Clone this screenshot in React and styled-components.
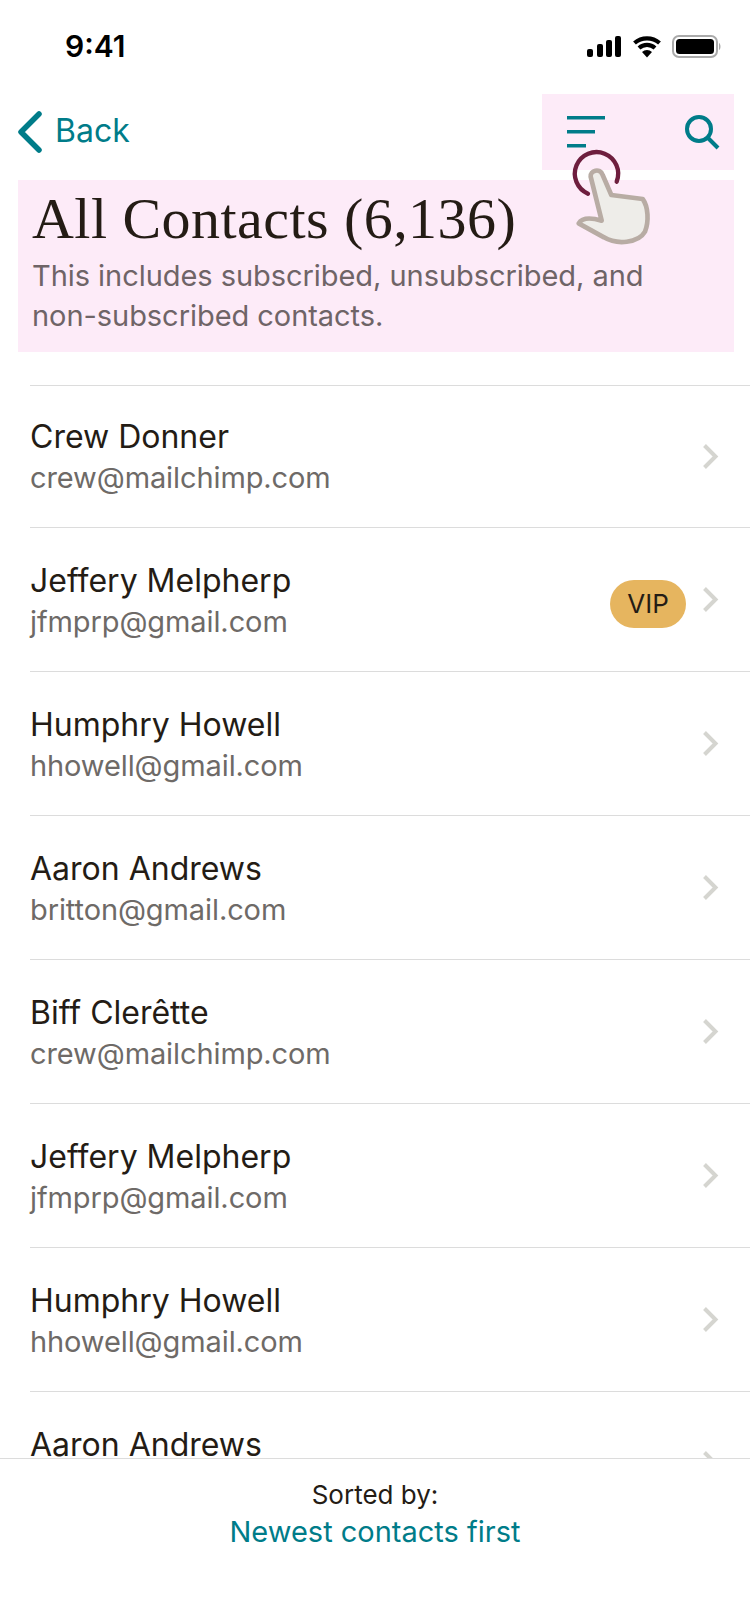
import React from "react";
import styled, { createGlobalStyle } from "styled-components";

const Global = createGlobalStyle`
  html, body { margin: 0; padding: 0; background: #fff; }
  #root { height: 1624px; }
  * { box-sizing: border-box; }
`;

const Screen = styled.div`
  width: 750px;
  height: 1624px;
  position: relative;
  display: flex;
  flex-direction: column;
  overflow: hidden;
  background: #fff;
  font-family: Inter, "Liberation Sans", sans-serif;
  color: #241c15;
`;

const StatusBar = styled.div`
  height: 94px;
  flex: none;
  display: flex;
  justify-content: space-between;
  padding: 26px 28px 0 65px;
`;

const Time = styled.span`
  font-size: 30px;
  line-height: 40px;
  font-weight: 600;
  color: #000;
`;

const StatusIcons = styled.svg`
  width: 135px;
  height: 30px;
  margin-top: 5px;
`;

const NavBar = styled.div`
  flex: none;
  height: 76px;
  display: flex;
  justify-content: space-between;
  align-items: center;
  padding: 0 16px 0 17px;
`;

const BackLink = styled.div`
  display: flex;
  align-items: center;
  gap: 13px;
  font-size: 32px;
  color: #007c89;
`;

const BackLabel = styled.span`
  margin-bottom: 4px;
`;

const Actions = styled.div`
  width: 192px;
  height: 76px;
  display: flex;
  justify-content: space-between;
  align-items: center;
  padding: 0 14px 0 25px;
  background: #fdebf8;
`;

const Header = styled.header`
  flex: none;
  margin: 10px 16px 0 18px;
  height: 172px;
  padding: 6px 14px 0;
  background: #fdebf8;
`;

const Title = styled.h1`
  margin: 0;
  font-family: "Liberation Serif", serif;
  font-weight: 400;
  font-size: 58px;
  line-height: 66px;
  letter-spacing: 0.45px;
  color: #241c15;
`;

const Subtitle = styled.p`
  margin: 4px 0 0;
  max-width: 630px;
  font-size: 29px;
  line-height: 40px;
  letter-spacing: -0.05px;
  color: #6f6467;
`;

const List = styled.div`
  flex: 1;
  min-height: 0;
  overflow: hidden;
  margin-top: 33px;
  padding-left: 30px;
`;

const RowText = styled.div`
  flex: 1;
  min-width: 0;
`;

const Row = styled.div`
  height: 144px;
  border-top: 1px solid #dcdcdc;
  display: flex;
  align-items: center;
  padding-right: 30px;

  &:first-child {
    height: 142px;
  }

  & + & > ${RowText} {
    margin-top: 2px;
  }
`;

const Name = styled.div`
  font-size: 32px;
  line-height: 42px;
  color: #241c15;
`;

const Email = styled.div`
  margin-top: 1px;
  font-size: 29px;
  line-height: 38px;
  letter-spacing: -0.1px;
  color: #6e6a67;
`;

const Badge = styled.span`
  width: 76px;
  height: 48px;
  margin: 8px 17px 0 0;
  border-radius: 24px;
  display: flex;
  align-items: center;
  justify-content: center;
  background: #e6b55f;
  font-size: 26px;
  color: #241c15;
`;

const Footer = styled.footer`
  flex: none;
  height: 166px;
  border-top: 1px solid #dcdcdc;
  padding-top: 19px;
  text-align: center;
`;

const SortLabel = styled.div`
  font-size: 26px;
  line-height: 34px;
  color: #241c15;
`;

const SortValue = styled.div`
  font-size: 29px;
  line-height: 40px;
  color: #007c89;
`;

const HandOverlay = styled.svg`
  position: absolute;
  left: 560px;
  top: 140px;
  width: 100px;
  height: 110px;
`;

const contacts = [
  ["Crew Donner", "crew@mailchimp.com"],
  ["Jeffery Melpherp", "jfmprp@gmail.com", true],
  ["Humphry Howell", "hhowell@gmail.com"],
  ["Aaron Andrews", "britton@gmail.com"],
  ["Biff Clerêtte", "crew@mailchimp.com"],
  ["Jeffery Melpherp", "jfmprp@gmail.com"],
  ["Humphry Howell", "hhowell@gmail.com"],
  ["Aaron Andrews", "britton@gmail.com"],
];

const Chevron = () => (
  <svg width="17" height="28" viewBox="0 0 17 28" fill="none">
    <path d="M1.5 2.5 L12.5 13.5 L1.5 24.5" stroke="#d5d5d0" strokeWidth="4" />
  </svg>
);

export default function App() {
  return (
    <Screen>
      <Global />
      <StatusBar>
        <Time>9:41</Time>
        <StatusIcons viewBox="0 0 135 30">
          <rect x="0" y="18" width="6" height="8" rx="2" fill="#000" />
          <rect x="10" y="13" width="6" height="13" rx="2" fill="#000" />
          <rect x="19" y="9" width="6" height="17" rx="2" fill="#000" />
          <rect x="28" y="5" width="6" height="21" rx="2" fill="#000" />
          <path d="M47.5 12 A19 19 0 0 1 72.5 12" fill="none" stroke="#000" strokeWidth="4.2" />
          <path d="M52 17 A12 12 0 0 1 68 17" fill="none" stroke="#000" strokeWidth="4.2" />
          <path d="M55 21 A7.5 7.5 0 0 1 65 21 L60 26.5 Z" fill="#000" />
          <rect x="86" y="5" width="44" height="21" rx="6" fill="none" stroke="#aaa" strokeWidth="2" />
          <rect x="89" y="8" width="38" height="15" rx="3.5" fill="#000" />
          <path d="M132 12 C134 13 134 18 132 19 Z" fill="#aaa" />
        </StatusIcons>
      </StatusBar>
      <NavBar>
        <BackLink>
          <svg width="25" height="42" viewBox="0 0 25 42" fill="none">
            <path d="M22 3 L4 21 L22 39" stroke="#007c89" strokeWidth="5.5" strokeLinecap="round" strokeLinejoin="round" />
          </svg>
          <BackLabel>Back</BackLabel>
        </BackLink>
        <Actions>
          <svg width="38" height="32" viewBox="0 0 38 32" fill="#007c89">
            <rect x="0" y="0" width="38" height="3.5" />
            <rect x="0" y="14" width="28" height="3.5" />
            <rect x="0" y="28" width="19" height="3.5" />
          </svg>
          <svg width="36" height="36" viewBox="0 0 36 36" fill="none" stroke="#007c89" strokeWidth="4">
            <circle cx="15" cy="15" r="12" />
            <path d="M24 24 L34 34" />
          </svg>
        </Actions>
      </NavBar>
      <Header>
        <Title>All Contacts (6,136)</Title>
        <Subtitle>This includes subscribed, unsubscribed, and non-subscribed contacts.</Subtitle>
      </Header>
      <List>
        {contacts.map(([name, email, vip], i) => (
          <Row key={i}>
            <RowText>
              <Name>{name}</Name>
              <Email>{email}</Email>
            </RowText>
            {vip && <Badge>VIP</Badge>}
            <Chevron />
          </Row>
        ))}
      </List>
      <Footer>
        <SortLabel>Sorted by:</SortLabel>
        <SortValue>Newest contacts first</SortValue>
      </Footer>
      <HandOverlay viewBox="180 420 300 330" fill="none">
        <path d="M264 581 A65 65 0 1 1 350 545" stroke="#6e1e3e" strokeWidth="13" strokeLinecap="round" />
        <path
          d="M272 530 C270 512 300 502 308 525 L334 585 L428 597 C445 620 447 665 435 695 C415 730 350 735 312 712 L236 670 C245 655 265 650 305 662 Z"
          fill="#eeede9"
          stroke="#b8aca4"
          strokeWidth="14"
          strokeLinejoin="round"
        />
      </HandOverlay>
    </Screen>
  );
}
